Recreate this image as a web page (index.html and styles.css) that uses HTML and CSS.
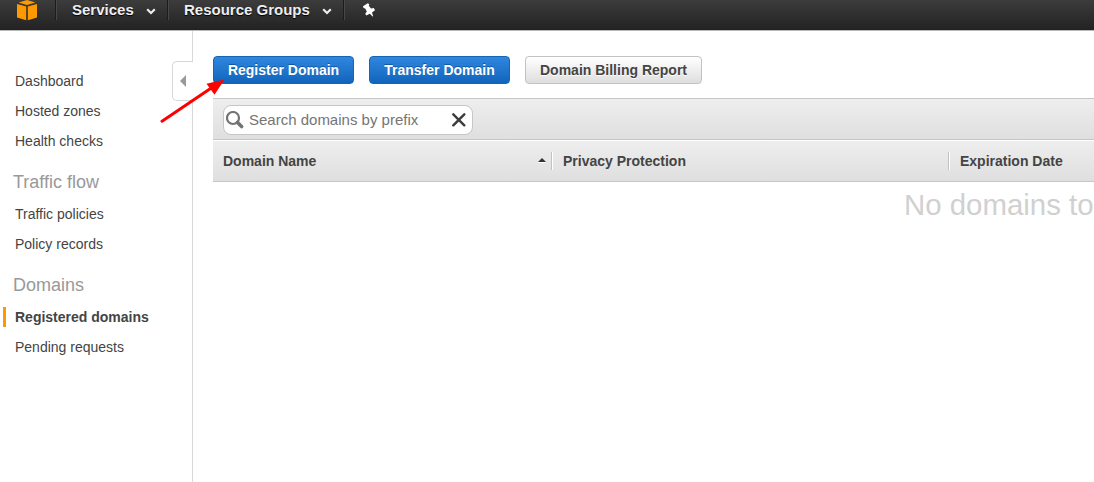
FILE: index.html
```html
<!DOCTYPE html>
<html lang="en">
<head>
<meta charset="utf-8">
<title>Registered domains</title>
<link rel="stylesheet" href="styles.css">
</head>
<body>
<header class="topbar">
  <div class="topbar-item logo">
    <svg width="22" height="21" viewBox="0 0 22 21" fill="#ff9900"><path d="M1 4 10.200 6.500V20.300L1 17.500zM11.800 6.500 21 4V17.500L11.800 20.300zM2.600 2.500 11 0 19.400 2.500 11 5z"/></svg>
  </div>
  <div class="topbar-item services"><span>Services</span>
    <svg class="chevron" width="10" height="7" viewBox="0 0 10 7"><path d="M1.200 1.300 5 5 8.800 1.300"/></svg>
  </div>
  <div class="topbar-item groups"><span>Resource Groups</span>
    <svg class="chevron" width="10" height="7" viewBox="0 0 10 7"><path d="M1.200 1.300 5 5 8.800 1.300"/></svg>
  </div>
  <div class="topbar-item pin">
    <svg width="14" height="14" viewBox="0 0 14 14" fill="#fff"><path d="M1 3.200 5.800.2 7.300 1.300 6.800 2.800 9 5.500 11.800 5 13 7.300 10 9.600 11.200 13.600 10.300 13.300 7.800 10.700 4.200 12.600 3.300 10.700 4.800 8.500 3.200 5.400 1.500 5z"/></svg>
  </div>
</header>
<div class="layout">
  <nav class="sidebar">
    <a class="link">Dashboard</a>
    <a class="link">Hosted zones</a>
    <a class="link">Health checks</a>
    <h2 class="heading">Traffic flow</h2>
    <a class="link">Traffic policies</a>
    <a class="link">Policy records</a>
    <h2 class="heading">Domains</h2>
    <a class="link active">Registered domains</a>
    <a class="link">Pending requests</a>
    <div class="collapse"><svg width="6" height="12" viewBox="0 0 6 12"><path d="M6 0V12L0 6z" fill="#999"/></svg></div>
  </nav>
  <main class="content">
    <div class="actions">
      <button class="button primary">Register Domain</button>
      <button class="button primary">Transfer Domain</button>
      <button class="button report">Domain Billing Report</button>
    </div>
    <div class="toolbar">
      <div class="search">
        <svg width="18" height="18" viewBox="0 0 18 18" fill="none" stroke="#737373"><circle cx="7" cy="7" r="6" stroke-width="2.200"/><path d="M11.500 11.500 15.600 15.600" stroke-width="3.600" stroke-linecap="round"/></svg>
        <input class="search-input" placeholder="Search domains by prefix">
        <svg width="14" height="14" viewBox="0 0 14 14" stroke="#3c3c3c" stroke-width="2.400" stroke-linecap="round"><path d="M1.300 1.300 12.300 12.300M12.300 1.300 1.300 12.300"/></svg>
      </div>
    </div>
    <div class="columns">
      <div class="column name"><span>Domain Name</span><svg class="sort" width="8" height="5" viewBox="0 0 8 5"><path d="M0 4 4 0 8 4z" fill="#333"/><path d="M0 4.500H8" stroke="#fff"/></svg></div>
      <div class="column privacy">Privacy Protection</div>
      <div class="column expiration">Expiration Date</div>
    </div>
    <p class="empty">No domains to</p>
  </main>
</div>
<svg class="arrow" width="66" height="46" viewBox="0 0 66 46"><path d="M2 42.200 52 8.500" stroke="#f00" stroke-width="3" stroke-linecap="round"/><path d="M64.500.5 46.500 4.700 54.500 15.800z" fill="#f00"/></svg>
</body>
</html>
```
FILE: styles.css
```css
* { box-sizing: border-box; }
body {
  margin: 0;
  height: 482px;
  overflow: hidden;
  background: #fff;
  color: #444;
  font: 14px/20px "Liberation Sans", Arial, sans-serif;
}
.topbar {
  display: flex;
  height: 31px;
  background: linear-gradient(#3c3c3c, #222);
  border-bottom: 1px solid #b8b8b8;
}
.topbar-item {
  display: flex;
  align-items: center;
  height: 20px;
  color: #eee;
  font-size: 15px;
  font-weight: bold;
  text-shadow: 0 1px 1px #000;
  border-right: 1px solid #484848;
  box-shadow: inset -1px 0 #1c1c1c;
}
.logo { width: 57px; padding-left: 16px; align-items: flex-start; }
.services { width: 112px; padding-left: 15px; }
.groups { width: 176px; padding-left: 15px; }
.services span { width: 73.5px; }
.groups span { width: 137.5px; }
.chevron { margin-top: 3px; fill: none; stroke: #eee; stroke-width: 2.2; }
.pin { border: 0; box-shadow: none; padding-left: 17px; }
.layout { display: flex; height: 451px; }
.sidebar {
  position: relative;
  flex: 0 0 193px;
  padding-top: 40px;
  border-right: 1px solid #d8d8d8;
}
.link {
  display: block;
  height: 20px;
  margin: 0 0 10px 3px;
  padding-left: 12px;
}
.active {
  padding-left: 9px;
  border-left: 3px solid #f90;
  font-weight: bold;
}
.heading {
  height: 43px;
  margin: 0;
  padding: 10px 0 0 13px;
  color: #999;
  font-size: 18px;
  font-weight: normal;
  line-height: 22px;
}
.collapse {
  position: absolute;
  top: 30px;
  right: -1px;
  display: flex;
  align-items: center;
  width: 21px;
  height: 40px;
  padding-left: 7px;
  background: #fff;
  border: 1px solid #d8d8d8;
  border-right: 0;
  border-radius: 5px 0 0 5px;
}
.content {
  flex: 1;
  min-width: 0;
  padding: 25px 0 0 20px;
}
.actions { display: flex; gap: 15px; margin-bottom: 14px; }
.button {
  width: 177px;
  height: 28px;
  padding: 0;
  border: 1px solid #c2c2c2;
  border-radius: 4px;
  background: linear-gradient(#fff, #dedede);
  color: #444;
  font: bold 14px/24px "Liberation Sans", Arial, sans-serif;
  text-shadow: 0 1px #fff;
}
.primary {
  width: 141px;
  border-color: #1565b4;
  background: linear-gradient(#3087df, #1164bb);
  color: #fff;
  text-shadow: 0 -1px #1059a5;
}
.toolbar {
  height: 42px;
  padding: 6px 10px;
  border: solid #c6c6c6;
  border-width: 1px 0;
  background: linear-gradient(#eee, #dfdfdf);
}
.search {
  display: flex;
  align-items: center;
  width: 250px;
  height: 30px;
  padding: 0 6px 1px 2px;
  border: 1px solid #c6c6c6;
  border-radius: 8px;
  background: #fff;
}
.search-input {
  flex: 1;
  min-width: 0;
  padding: 0 0 0 5px;
  border: 0;
  background: none;
  color: #444;
  font: 15px "Liberation Sans", Arial, sans-serif;
}
.columns {
  display: flex;
  align-items: center;
  height: 42px;
  border-top: 1px solid #fff;
  border-bottom: 1px solid #c6c6c6;
  background: linear-gradient(#eee, #dfdfdf);
  font-weight: bold;
}
.column {
  display: flex;
  align-items: center;
  height: 18px;
  padding: 0 6px 0 10px;
  border-right: 1px solid #fff;
  box-shadow: inset -1px 0 #c2c2c2;
}
.name { width: 340px; justify-content: space-between; }
.sort { margin: 0 .5px 1px 0; }
.privacy { width: 397px; }
.expiration { flex: 1; border: 0; box-shadow: none; }
.empty {
  margin: 6px 0 0 691px;
  color: #d0d0d0;
  font-size: 29.4px;
  line-height: 34px;
  white-space: nowrap;
}
.arrow { position: absolute; left: 160px; top: 79px; }
```
